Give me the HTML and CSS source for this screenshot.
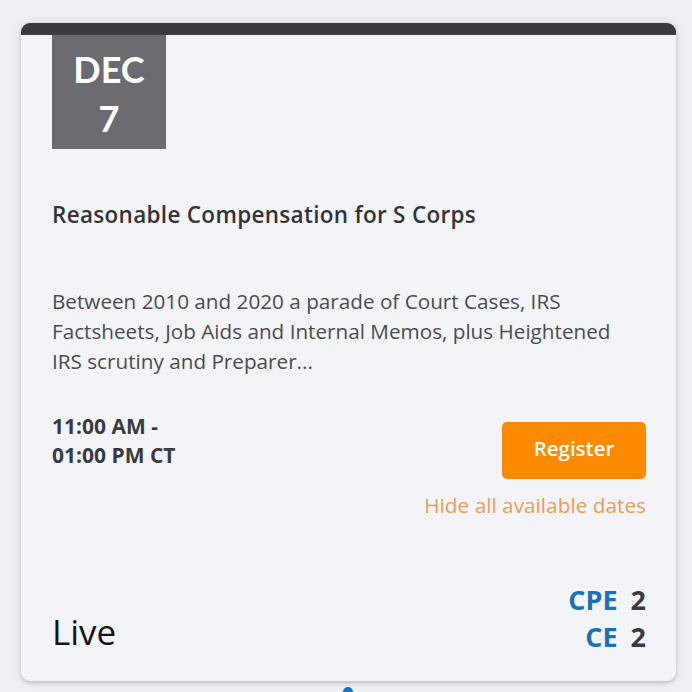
FILE: index.html
```html
<!DOCTYPE html>
<html lang="en">
<head>
<meta charset="utf-8">
<title>Event</title>
<link rel="stylesheet" href="styles.css">
</head>
<body>
<div class="page">
  <div class="card">
    <div class="date-box">
      <span class="month">DEC</span>
      <span class="day">7</span>
    </div>
    <h2 class="title">Reasonable Compensation for S Corps</h2>
    <p class="desc">Between 2010 and 2020 a parade of Court Cases, IRS<br>Factsheets, Job Aids and Internal Memos, plus Heightened<br>IRS scrutiny and Preparer...</p>
    <div class="mid-row">
      <div class="time">11:00 AM -<br>01:00 PM CT</div>
      <div class="actions">
        <button class="register">Register</button>
        <a class="hide-link">Hide all available dates</a>
      </div>
    </div>
    <div class="bottom-row">
      <div class="format">Live</div>
      <div class="credits">
        <div class="credit"><span class="credit-label">CPE</span><span class="credit-value">2</span></div>
        <div class="credit"><span class="credit-label">CE</span><span class="credit-value">2</span></div>
      </div>
    </div>
  </div>
  <div class="next-dot"></div>
</div>
</body>
</html>
```
FILE: styles.css
```css
* { box-sizing: border-box; }
html, body { margin: 0; padding: 0; }
body {
  background: #eff0f3;
  font-family: "Open Sans", Lato, sans-serif;
  width: 692px;
  height: 692px;
  overflow: hidden;
}
.page {
  padding: 23px 0 0 21px;
  display: flex;
  flex-direction: column;
}
.card {
  width: 655px;
  height: 658px;
  background: #f3f4f8;
  border-top: 12px solid #3a3b3f;
  border-radius: 9px;
  box-shadow: 0 2px 4px rgba(0,0,0,0.18), 0 0 14px rgba(0,0,0,0.07);
  padding: 0 30px 0 31px;
  display: flex;
  flex-direction: column;
}
.date-box {
  width: 114px;
  height: 114px;
  background: #6b6c72;
  color: #fff;
  display: flex;
  flex-direction: column;
  align-items: center;
  justify-content: center;
  padding-top: 3px;
  font-family: Lato, "Open Sans", sans-serif;
  font-weight: 700;
  font-size: 36px;
  line-height: 49px;
}
.title {
  margin: 52px 0 0;
  font-size: 22.5px;
  line-height: 28px;
  font-weight: 600;
  letter-spacing: 0.3px;
  color: #333438;
}
.desc {
  margin: 57px 0 0;
  font-size: 20.7px;
  line-height: 30px;
  font-weight: 400;
  color: #4a4b50;
}
.mid-row {
  margin-top: 36px;
  display: flex;
  justify-content: space-between;
  align-items: flex-start;
}
.time {
  font-size: 21px;
  line-height: 29px;
  font-weight: 700;
  color: #3a3b40;
}
.actions {
  padding-top: 10px;
  display: flex;
  flex-direction: column;
  align-items: flex-end;
}
.register {
  width: 144px;
  height: 57px;
  border: none;
  border-radius: 5px;
  background: #fb8a00;
  color: #fff;
  font-family: inherit;
  font-size: 20.5px;
  font-weight: 600;
  padding: 0 0 5px;
}
.hide-link {
  margin-top: 13px;
  font-size: 20.8px;
  line-height: 26px;
  color: #ec9c55;
}
.bottom-row {
  margin-top: auto;
  padding-bottom: 26px;
  display: flex;
  justify-content: space-between;
  align-items: flex-end;
}
.format {
  font-size: 35px;
  line-height: 40px;
  color: #141416;
  margin-bottom: 3px;
}
.credits {
  display: flex;
  flex-direction: column;
  align-items: flex-end;
}
.credit {
  font-size: 27px;
  line-height: 37px;
  font-weight: 700;
  display: flex;
  gap: 13px;
}
.credit-label { color: #1a72b6; }
.credit-value { color: #3a3b40; }
.next-dot {
  align-self: flex-start;
  margin: 6px 0 0 322px;
  width: 10px;
  height: 10px;
  border-radius: 50%;
  background: #1d6fc0;
}
```
